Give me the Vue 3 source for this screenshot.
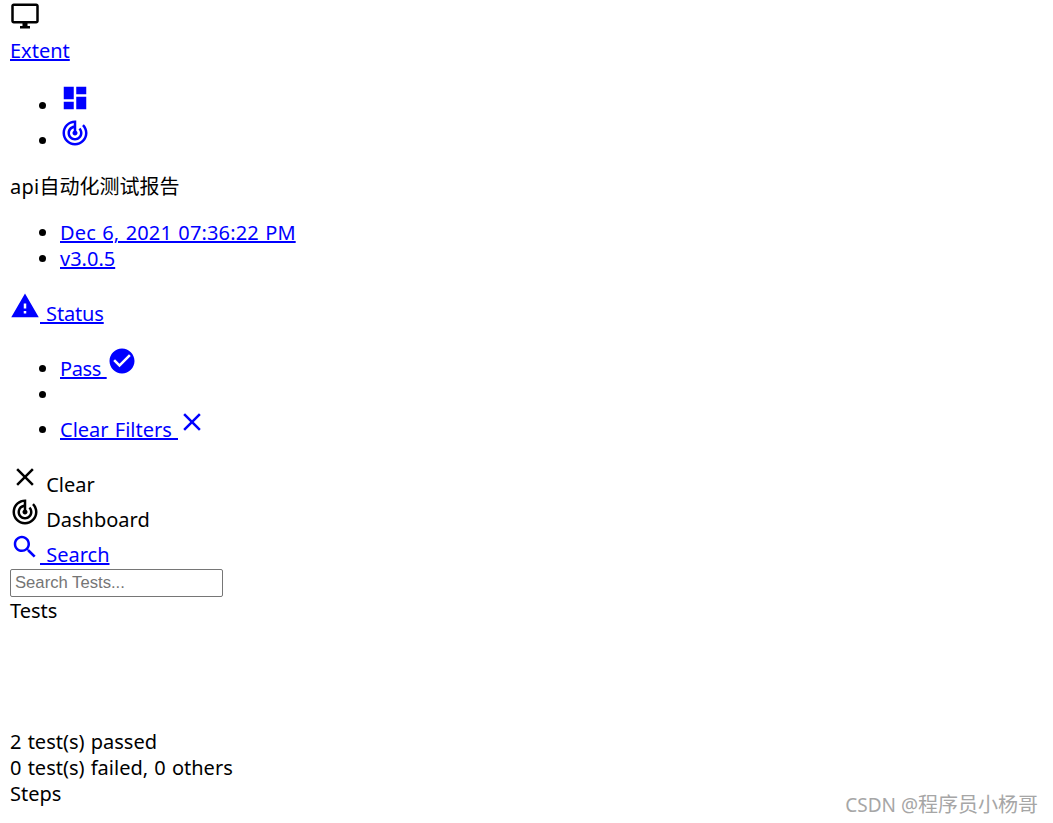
<script setup>
const icons = {
  monitor: 'M21 2H3c-1.1 0-2 .9-2 2v12c0 1.1.9 2 2 2h7v2H8v2h8v-2h-2v-2h7c1.1 0 2-.9 2-2V4c0-1.1-.9-2-2-2zm0 14H3V4h18v12z',
  dashboard: 'M3 13h8V3H3v10zm0 8h8v-6H3v6zm10 0h8V11h-8v10zm0-18v6h8V3h-8z',
  track: 'M19.07 4.93l-1.41 1.41C19.1 7.79 20 9.79 20 12c0 4.42-3.58 8-8 8s-8-3.58-8-8c0-4.08 3.05-7.44 7-7.93v2.02C8.16 6.57 6 9.03 6 12c0 3.31 2.69 6 6 6s6-2.69 6-6c0-1.66-.67-3.16-1.76-4.24l-1.41 1.41C15.55 9.9 16 10.9 16 12c0 2.21-1.79 4-4 4s-4-1.79-4-4c0-1.86 1.28-3.41 3-3.86v2.14c-.6.35-1 .98-1 1.72 0 1.1.9 2 2 2s2-.9 2-2c0-.74-.4-1.38-1-1.72V2h-1C6.48 2 2 6.48 2 12s4.48 10 10 10 10-4.48 10-10c0-2.76-1.12-5.26-2.93-7.07z',
  warning: 'M1 21h22L12 2 1 21zm12-3h-2v-2h2v2zm0-4h-2v-4h2v4z',
  check: 'M12 2C6.48 2 2 6.48 2 12s4.48 10 10 10 10-4.48 10-10S17.52 2 12 2zm-2 15l-5-5 1.41-1.41L10 14.17l7.59-7.59L19 8l-9 9z',
  clear: 'M19 6.41L17.59 5 12 10.59 6.41 5 5 6.41 10.59 12 5 17.59 6.41 19 12 13.41 17.59 19 19 17.59 13.41 12z',
  search: 'M15.5 14h-.79l-.28-.27C15.41 12.59 16 11.11 16 9.5 16 5.91 13.09 3 9.5 3S3 5.91 3 9.5 5.91 16 9.5 16c1.61 0 3.09-.59 4.23-1.57l.27.28v.79l5 4.99L20.49 19l-4.99-5zm-6 0C7.01 14 5 11.99 5 9.5S7.01 5 9.5 5 14 7.01 14 9.5 11.99 14 9.5 14z'
}
</script>

<template>
  <div class="report">
    <div class="icon-row top-row"><svg class="icon" viewBox="0 0 24 24"><path :d="icons.monitor" /></svg></div>
    <div class="brand"><a href="#">Extent</a></div>

    <ul class="list">
      <li class="icon-row"><a href="#"><svg class="icon" viewBox="0 0 24 24"><path :d="icons.dashboard" /></svg></a></li>
      <li class="icon-row"><a href="#"><svg class="icon" viewBox="0 0 24 24"><path :d="icons.track" /></svg></a></li>
    </ul>

    <p class="title"><span class="api">api</span>自动化测试报告</p>

    <ul class="list">
      <li><a href="#" class="date">Dec 6, 2021 07:36:22 PM</a></li>
      <li><a href="#">v3.0.5</a></li>
    </ul>

    <div class="icon-row status">
      <a href="#"><svg class="icon" viewBox="0 0 24 24"><path :d="icons.warning" /></svg> Status</a>
    </div>

    <ul class="list">
      <li class="icon-row"><a href="#" class="pass">Pass </a> <svg class="icon link-icon" viewBox="0 0 24 24"><path :d="icons.check" /></svg></li>
      <li></li>
      <li class="icon-row"><a href="#">Clear Filters </a> <svg class="icon link-icon clear-icon" viewBox="0 0 24 24"><path :d="icons.clear" /></svg></li>
    </ul>

    <div class="icon-row"><svg class="icon" viewBox="0 0 24 24"><path :d="icons.clear" /></svg> Clear</div>
    <div class="icon-row"><svg class="icon" viewBox="0 0 24 24"><path :d="icons.track" /></svg> Dashboard</div>
    <div class="icon-row"><a href="#"><svg class="icon" viewBox="0 0 24 24"><path :d="icons.search" /></svg> Search</a></div>

    <input class="search" type="text" placeholder="Search Tests..." />
    <div>Tests</div>
    <div class="chart"></div>
    <div>2 test(s) passed</div>
    <div>0 test(s) failed, 0 others</div>
    <div>Steps</div>

    <div class="watermark"><span class="mark-latin">CSDN @</span>程序员小杨哥</div>
  </div>
</template>

<style>
html,
body {
  margin: 0;
  background: #fff;
}
</style>

<style scoped>
.report {
  position: relative;
  height: 823px;
  box-sizing: border-box;
  padding: 0 10px;
  overflow: hidden;
  color: #000;
  font-family: "Noto Sans", "Noto Sans CJK SC", sans-serif;
  font-size: 20px;
  line-height: 26px;
  word-spacing: 1px;
}

a {
  color: #00f;
}

.icon {
  width: 30px;
  height: 30px;
  margin-top: -1px;
  fill: currentColor;
  vertical-align: baseline;
}

.link-icon {
  color: #00f;
}

.clear-icon {
  margin-left: -1px;
}

.pass {
  letter-spacing: -0.4px;
}

.icon-row {
  height: 35px;
}

.top-row .icon {
  margin-top: 1px;
}

.brand {
  margin-top: 3px;
}

.list {
  margin: 20px 0;
  padding-left: 50px;
}

.list li {
  min-height: 26px;
}

.list li.icon-row {
  height: 35px;
}

.title {
  margin: 20px 0;
}

.api {
  letter-spacing: 0.3px;
}

.date {
  letter-spacing: 0.14px;
}

.status {
  margin: 20px 0;
  letter-spacing: -0.15px;
}

.search {
  display: block;
  box-sizing: border-box;
  width: 213px;
  height: 28px;
  margin: 1px 0 1px;
  padding: 1px 4px;
  border: 1px solid #767676;
  border-radius: 2px;
  font-family: "Liberation Sans", sans-serif;
  font-size: 16.67px;
}

.search::placeholder {
  color: #757575;
}

.chart {
  height: 105px;
}

.watermark {
  position: absolute;
  right: 15px;
  bottom: 5px;
  color: #a6a6a6;
  font-size: 20px;
  word-spacing: 0;
}

.mark-latin {
  font-size: 19px;
}
</style>
